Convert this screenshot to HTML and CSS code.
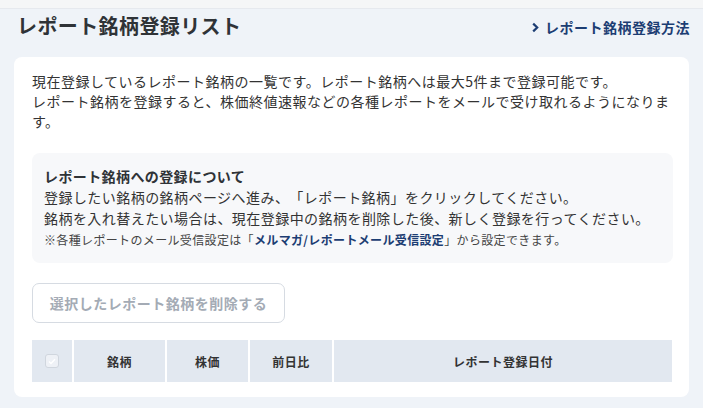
FILE: index.html
```html
<!DOCTYPE html>
<html lang="ja">
<head>
<meta charset="utf-8">
<link rel="stylesheet" href="styles.css">
</head>
<body>
<div class="topband"></div>
<header class="head">
  <h1 class="title">レポート銘柄登録リスト</h1>
  <a class="howto" href="#"><svg class="chev" width="9" height="11" viewBox="0 0 9 11"><path d="M2.2 1.6 L6.2 5.5 L2.2 9.4" fill="none" stroke="currentColor" stroke-width="2.2"/></svg>レポート銘柄登録方法</a>
</header>
<main class="card">
  <p class="lead">現在登録しているレポート銘柄の一覧です。レポート銘柄へは最大5件まで登録可能です。<br>レポート銘柄を登録すると、株価終値速報などの各種レポートをメールで受け取れるようになります。</p>
  <section class="info">
    <h2 class="info-title">レポート銘柄への登録について</h2>
    <p class="info-line">登録したい銘柄の銘柄ページへ進み、「レポート銘柄」をクリックしてください。</p>
    <p class="info-line">銘柄を入れ替えたい場合は、現在登録中の銘柄を削除した後、新しく登録を行ってください。</p>
    <p class="note">※各種レポートのメール受信設定は「<a href="#">メルマガ/レポートメール受信設定</a>」から設定できます。</p>
  </section>
  <button class="del" type="button">選択したレポート銘柄を削除する</button>
  <div class="thead">
    <div class="th th-check"><span class="cb"><svg width="8" height="7" viewBox="0 0 8 7"><path d="M1 3.5 L3 5.5 L7 1.2" fill="none" stroke="#fff" stroke-width="1.4"/></svg></span></div>
    <div class="th">銘柄</div>
    <div class="th">株価</div>
    <div class="th">前日比</div>
    <div class="th">レポート登録日付</div>
  </div>
</main>
</body>
</html>
```
FILE: styles.css
```css
* { box-sizing: border-box; }
html, body { margin: 0; padding: 0; }
body {
  background: #eff3f8;
  font-family: "Noto Sans CJK JP", "Noto Sans", sans-serif;
  color: #333;
  width: 703px;
  height: 408px;
  overflow: hidden;
  text-spacing-trim: space-all;
}
.topband {
  height: 9px;
  background: #f5f6f7;
  border-bottom: 1px solid #e6e9ee;
}
.head {
  height: 48px;
  display: flex;
  align-items: center;
  justify-content: space-between;
  padding: 0 13px 14px 17px;
}
.title {
  margin: 0;
  font-size: 20px;
  font-weight: 700;
  line-height: 28px;
  color: #2f3337;
  letter-spacing: 0.4px;
}
.howto {
  display: flex;
  align-items: center;
  gap: 5px;
  font-size: 14px;
  letter-spacing: 0.5px;
  font-weight: 700;
  color: #1c3d73;
  text-decoration: none;
  margin-top: 2px;
}
.chev { display: block; }
.card {
  margin: 0 14px;
  width: 675px;
  height: 340px;
  background: #fff;
  border-radius: 8px;
  padding: 14px 16px 14px 18px;
}
.lead {
  margin: 0;
  font-size: 14px;
  letter-spacing: 0.5px;
  line-height: 20px;
  color: #333;
}
.info {
  margin-top: 22px;
  width: 641px;
  background: #f7f8fa;
  border-radius: 8px;
  padding: 13px 12px 13px 12px;
}
.info-title {
  margin: 0;
  font-size: 14px;
  letter-spacing: 0.4px;
  font-weight: 700;
  line-height: 21px;
  color: #2f3337;
}
.info-line {
  margin: 0;
  font-size: 14px;
  letter-spacing: 0.45px;
  line-height: 21px;
  color: #333;
}
.note {
  margin: 1px 0 0;
  font-size: 12px;
  letter-spacing: 0.35px;
  line-height: 20px;
  color: #444;
}
.note a { color: #1c3d73; font-weight: 700; text-decoration: none; }
.del {
  display: block;
  margin-top: 20px;
  width: 253px;
  height: 40px;
  background: #fff;
  border: 1px solid #d6dbe2;
  border-radius: 7px;
  font-family: inherit;
  font-size: 14px;
  letter-spacing: 0.5px;
  font-weight: 700;
  color: #a4abb5;
  padding: 0;
}
.thead {
  margin-top: 17px;
  display: grid;
  grid-template-columns: 40px 91px 81px 82px 338px;
  column-gap: 2px;
  width: 640px;
  height: 42px;
}
.th {
  background: #e2e8f0;
  display: flex;
  align-items: center;
  justify-content: center;
  font-size: 12px;
  letter-spacing: 0.5px;
  font-weight: 700;
  color: #333;
}
.cb {
  width: 14px;
  height: 14px;
  border-radius: 3px;
  background: #eef1f6;
  border: 1px solid #d0d6de;
  display: flex;
  align-items: center;
  justify-content: center;
}
```
